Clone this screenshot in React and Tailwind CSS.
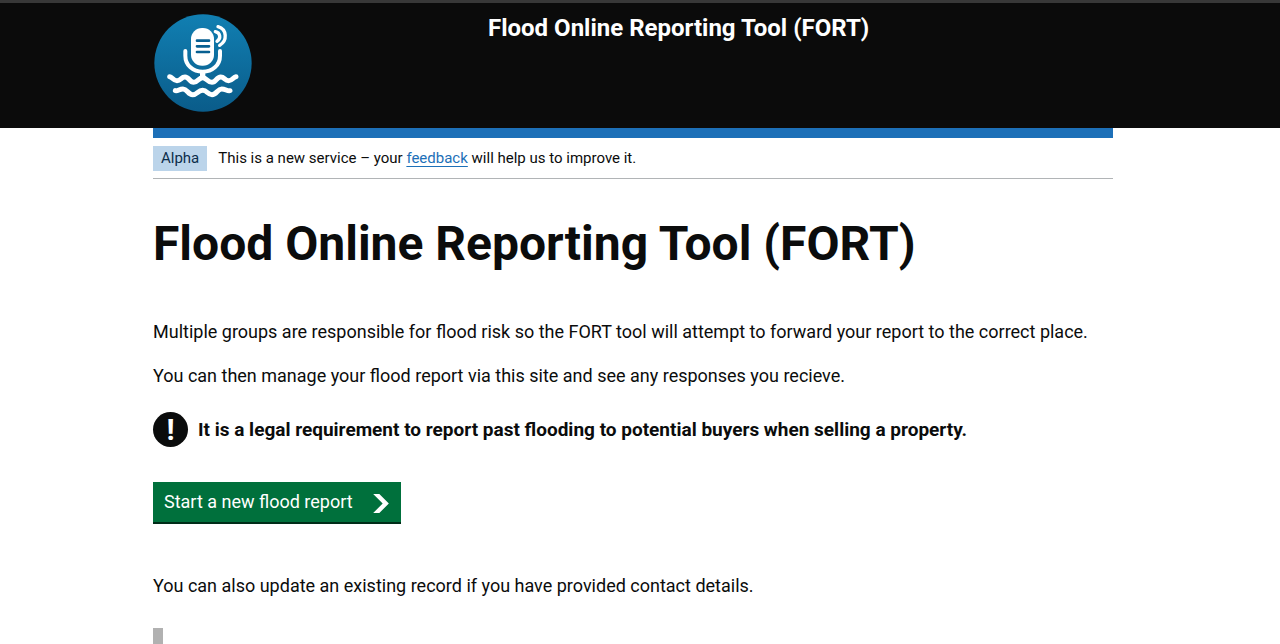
import React from "react";

function Logo() {
  return (
    <svg viewBox="0 0 294 294" className="block size-[98px]" role="img" aria-label="Flood reporting home">
      <defs>
        <linearGradient id="disc" x1="0" y1="0" x2="0" y2="1">
          <stop offset="0" stopColor="#117fb2" />
          <stop offset="1" stopColor="#0a5c8a" />
        </linearGradient>
      </defs>
      <circle cx="147" cy="147" r="146" fill="url(#disc)" />
      <rect x="111" y="42" width="69" height="113" rx="33" fill="#fff" />
      <g fill="none" strokeLinecap="round" strokeLinejoin="round">
        <path d="M129 80h36M129 97h36M129 114h36" stroke="#075f91" strokeWidth="8" />
        <g stroke="#fff">
          <path d="M94 111v14c0 29 23 48 52 48s52-19 52-48v-14" strokeWidth="12" />
          <path d="M146 173v16" strokeWidth="16" strokeLinecap="butt" />
          <path d="M184 53c15 3 18 20 5 29" strokeWidth="10" />
          <path d="M192 38c27 8 29 42 5 56" strokeWidth="10" />
          <path d="M47 188C55 189 58 200 69 200C81 200 81 189 93 189C106 189 106 205 119 205C132 205 133 191 146 191C159 191 160 205 174 205C187 205 187 189 200 189C212 189 212 200 224 200C235 200 238 189 246 188" strokeWidth="15" />
          <path d="M64 230C72 232 76 225 87 225C100 225 102 242 116 242C130 242 131 229 146 229C160 229 160 242 174 242C188 242 190 225 203 225C215 225 219 232 228 230" strokeWidth="15" />
        </g>
      </g>
    </svg>
  );
}

function Container({ className = "", children }) {
  return <div className={"mx-auto w-full max-w-[960px] " + className}>{children}</div>;
}

export default function App() {
  return (
    <div className="bg-white font-[Roboto,'Liberation_Sans',sans-serif] text-lg leading-6 text-[#0b0c0c]">
      <header className="border-t-3 border-[#383838] bg-[#0b0b0b] pt-[11px] pr-[14px] pb-4 text-white">
        <Container className="grid grid-cols-3">
          <a href="#" className="justify-self-start pl-px">
            <Logo />
          </a>
          <a href="#" className="col-span-2 pl-[15px] text-2xl leading-7 font-bold">
            Flood Online Reporting Tool (FORT)
          </a>
        </Container>
      </header>

      <div className="pr-[14px]">
        <Container>
          <div className="h-[10px] bg-[#1d70b8]" />
          <div className="flex items-center gap-[11px] border-b border-[#b1b4b6] pt-2 pb-[7px] text-[15px] leading-[25px]">
            <strong className="bg-[#bbd4ea] px-2 font-normal text-[#0c2d4a]">Alpha</strong>
            <p>
              This is a new service – your{" "}
              <a href="#" className="text-[#1d70b8] underline decoration-1 underline-offset-3">
                feedback
              </a>{" "}
              will help us to improve it.
            </p>
          </div>

          <main className="pt-10">
            <h1 className="mb-[51px] text-5xl leading-[50px] font-bold">Flood Online Reporting Tool (FORT)</h1>
            <p className="mb-5">
              Multiple groups are responsible for flood risk so the FORT tool will attempt to forward your report to the
              correct place.
            </p>
            <p className="mb-6">You can then manage your flood report via this site and see any responses you recieve.</p>

            <div className="mb-[35px] flex items-center gap-[10px]">
              <span
                aria-hidden="true"
                className="flex size-[35px] shrink-0 items-center justify-center rounded-full bg-[#0b0c0c] text-3xl leading-[35px] font-bold text-white"
              >
                !
              </span>
              <strong className="text-[19px] font-bold">
                It is a legal requirement to report past flooding to potential buyers when selling a property.
              </strong>
            </div>

            <button
              type="button"
              className="mb-[50px] flex h-[42px] items-center gap-5 border-b-2 border-[#002d18] bg-[#00703c] pr-3 pl-[11px] text-white"
            >
              Start a new flood report
              <svg viewBox="0 0 33 40" className="h-[19px] w-4 translate-y-px" fill="currentColor" aria-hidden="true">
                <path d="M0 0h13l20 20-20 20H0l20-20z" />
              </svg>
            </button>

            <p className="mb-[30px]">You can also update an existing record if you have provided contact details.</p>
            <div className="min-h-4 border-l-10 border-[#b1b1b1]" />
          </main>
        </Container>
      </div>
    </div>
  );
}
